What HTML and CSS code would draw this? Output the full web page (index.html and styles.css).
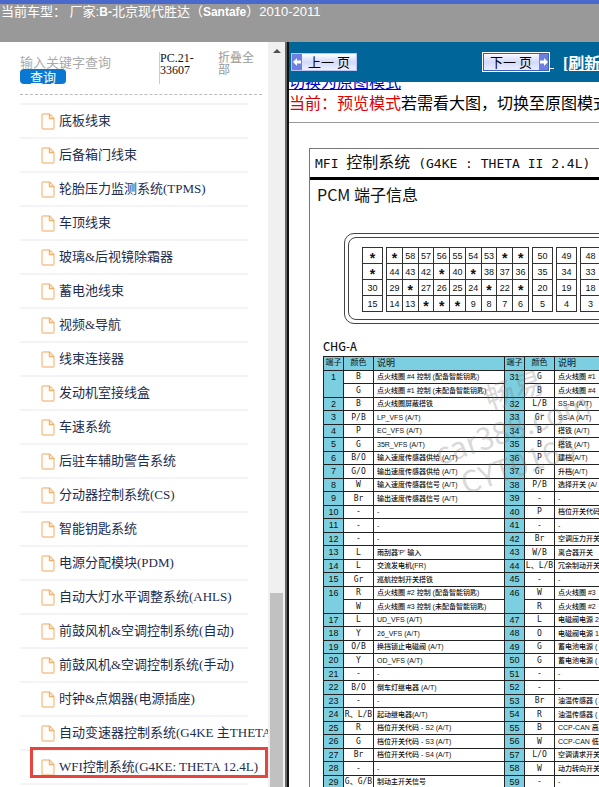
FILE: index.html
```html
<!DOCTYPE html>
<html lang="zh-CN">
<head>
<meta charset="utf-8">
<title>北京现代胜达（Santafe）2010-2011</title>
<link rel="stylesheet" href="styles.css">
</head>
<body>
<svg class="defs" aria-hidden="true">
  <symbol id="doc" viewBox="0 0 14 17">
    <path d="M2 1h6.500l4.500 4.500V15q0 1-1 1H2q-1 0-1-1V2q0-1 1-1z" fill="#fffdf9" stroke="#f3c595" stroke-width="1.400"/>
    <path d="M8.500 1v4.500H13" fill="none" stroke="#f0b36c" stroke-width="1.400"/>
  </symbol>
</svg>
<header class="topbar">
  <h1>当前车型： 厂家:<b>B-</b>北京现代胜达（<b>Santafe</b>）2010-2011</h1>
</header>
<div class="frames">
  <aside class="sidebar">
    <div class="side-body">
      <form class="search">
        <div class="search-box">
          <input type="text" aria-label="输入关键字查询" placeholder="输入关键字查询">
          <button type="button">查询</button>
        </div>
        <div class="code">PC.21-33607</div>
        <a class="fold" href="#">折叠全部</a>
      </form>
      <ul class="tree">
        <li><a href="#"><svg><use href="#doc"/></svg>底板线束</a></li>
        <li><a href="#"><svg><use href="#doc"/></svg>后备箱门线束</a></li>
        <li><a href="#"><svg><use href="#doc"/></svg>轮胎压力监测系统(TPMS)</a></li>
        <li><a href="#"><svg><use href="#doc"/></svg>车顶线束</a></li>
        <li><a href="#"><svg><use href="#doc"/></svg>玻璃&amp;后视镜除霜器</a></li>
        <li><a href="#"><svg><use href="#doc"/></svg>蓄电池线束</a></li>
        <li><a href="#"><svg><use href="#doc"/></svg>视频&amp;导航</a></li>
        <li><a href="#"><svg><use href="#doc"/></svg>线束连接器</a></li>
        <li><a href="#"><svg><use href="#doc"/></svg>发动机室接线盒</a></li>
        <li><a href="#"><svg><use href="#doc"/></svg>车速系统</a></li>
        <li><a href="#"><svg><use href="#doc"/></svg>后驻车辅助警告系统</a></li>
        <li><a href="#"><svg><use href="#doc"/></svg>分动器控制系统(CS)</a></li>
        <li><a href="#"><svg><use href="#doc"/></svg>智能钥匙系统</a></li>
        <li><a href="#"><svg><use href="#doc"/></svg>电源分配模块(PDM)</a></li>
        <li><a href="#"><svg><use href="#doc"/></svg>自动大灯水平调整系统(AHLS)</a></li>
        <li><a href="#"><svg><use href="#doc"/></svg>前鼓风机&amp;空调控制系统(自动)</a></li>
        <li><a href="#"><svg><use href="#doc"/></svg>前鼓风机&amp;空调控制系统(手动)</a></li>
        <li><a href="#"><svg><use href="#doc"/></svg>时钟&amp;点烟器(电源插座)</a></li>
        <li><a href="#"><svg><use href="#doc"/></svg>自动变速器控制系统(G4KE 主THETA</a></li>
        <li class="marked"><a href="#"><svg><use href="#doc"/></svg>WFI控制系统(G4KE: THETA 12.4L)</a></li>
        <li></li>
      </ul>
    </div>
    <div class="scrollbar" aria-hidden="true"><i class="arrow"></i><i class="thumb"></i></div>
  </aside>
  <main class="content">
    <nav class="pager">
      <button class="prev" type="button"><svg viewBox="0 0 10 16"><path d="M1 8l4-4v2.500h4v3H5V12z"/></svg><span>上一 页</span></button>
      <button class="next" type="button"><span>下一 页</span><svg viewBox="0 0 10 16"><path d="M9 8L5 4v2.500H1v3h4V12z"/></svg></button>
      <a href="#"><b>&nbsp;</b></a>
      <a class="refresh" href="#">[刷新]</a>
    </nav>
    <div class="mode">
      <p class="switch"><a href="#">切换为原图模式</a></p>
      <p><em>当前：预览模式</em>若需看大图，切换至原图模式</p>
    </div>
    <article class="sheet">
      <h2>MFI <span>控制系统</span> (G4KE : THETA II 2.4L)</h2>
      <h3>PCM 端子信息</h3>
      <div class="connector">
        <div class="shell">
          <div class="pins one"><i class="s">*</i><i class="s">*</i><i>30</i><i>15</i></div>
          <div class="pins nine">
            <i class="s">*</i><i>58</i><i>57</i><i>56</i><i>55</i><i>54</i><i>53</i><i class="s">*</i><i class="s">*</i>
            <i>44</i><i>43</i><i>42</i><i class="s">*</i><i>40</i><i class="s">*</i><i>38</i><i>37</i><i>36</i>
            <i>29</i><i class="s">*</i><i>27</i><i>26</i><i>25</i><i>24</i><i class="s">*</i><i>22</i><i class="s">*</i>
            <i>14</i><i>13</i><i class="s">*</i><i class="s">*</i><i class="s">*</i><i>9</i><i>8</i><i>7</i><i>6</i>
          </div>
          <div class="pins one"><i>50</i><i>35</i><i>20</i><i>5</i></div>
          <div class="pins one"><i>49</i><i>34</i><i>19</i><i>4</i></div>
          <div class="pins one"><i>48</i><i>33</i><i>18</i><i>3</i></div>
        </div>
      </div>
      <h4>CHG-A</h4>
      <div class="chart">
      <table>
        <colgroup><col class="c-no"><col class="c-color"><col class="c-text"><col class="c-no"><col class="c-color"><col class="c-text"></colgroup>
        <thead><tr><th>端子</th><th>颜色</th><th class="d">说明</th><th>端子</th><th>颜色</th><th class="d">说明</th></tr></thead>
        <tbody>
        <tr><th rowspan="2">1</th><td>B</td><td class="d">点火线圈 #4 控制 (配备智能钥匙)</td><th rowspan="2">31</th><td>G</td><td class="d">点火线圈 #1</td></tr>
        <tr><td>G</td><td class="d">点火线圈 #1 控制 (未配备智能钥匙)</td><td>B</td><td class="d">点火线圈 #4</td></tr>
        <tr><th>2</th><td>B</td><td class="d">点火线圈屏蔽搭铁</td><th>32</th><td>L/B</td><td class="d">SS-B (A/T)</td></tr>
        <tr><th>3</th><td>P/B</td><td class="d">LP_VFS (A/T)</td><th>33</th><td>Gr</td><td class="d">SS-A (A/T)</td></tr>
        <tr><th>4</th><td>P</td><td class="d">EC_VFS (A/T)</td><th>34</th><td>B</td><td class="d">搭铁 (A/T)</td></tr>
        <tr><th>5</th><td>G</td><td class="d">35R_VFS (A/T)</td><th>35</th><td>B</td><td class="d">搭铁 (A/T)</td></tr>
        <tr><th>6</th><td>B/O</td><td class="d">输入速度传感器供给 (A/T)</td><th>36</th><td>P</td><td class="d">建档(A/T)</td></tr>
        <tr><th>7</th><td>G/O</td><td class="d">输出速度传感器供给 (A/T)</td><th>37</th><td>Gr</td><td class="d">升档(A/T)</td></tr>
        <tr><th>8</th><td>W</td><td class="d">输入速度传感器信号 (A/T)</td><th>38</th><td>P/B</td><td class="d">选择开关 (A/</td></tr>
        <tr><th>9</th><td>Br</td><td class="d">输出速度传感器信号 (A/T)</td><th>39</th><td>-</td><td class="d">-</td></tr>
        <tr><th>10</th><td>-</td><td class="d">-</td><th>40</th><td>P</td><td class="d">档位开关代码</td></tr>
        <tr><th>11</th><td>-</td><td class="d">-</td><th>41</th><td>-</td><td class="d">-</td></tr>
        <tr><th>12</th><td>-</td><td class="d">-</td><th>42</th><td>Br</td><td class="d">空调压力开关</td></tr>
        <tr><th>13</th><td>L</td><td class="d">雨刮器'P' 输入</td><th>43</th><td>W/B</td><td class="d">离合器开关</td></tr>
        <tr><th>14</th><td>L</td><td class="d">交流发电机(FR)</td><th>44</th><td>L、L/B</td><td class="d">冗余制动开关</td></tr>
        <tr><th>15</th><td>Gr</td><td class="d">巡航控制开关搭铁</td><th>45</th><td>-</td><td class="d">-</td></tr>
        <tr><th rowspan="2">16</th><td>R</td><td class="d">点火线圈 #2 控制 (配备智能钥匙)</td><th rowspan="2">46</th><td>W</td><td class="d">点火线圈 #3</td></tr>
        <tr><td>W</td><td class="d">点火线圈 #3 控制 (未配备智能钥匙)</td><td>R</td><td class="d">点火线圈 #2</td></tr>
        <tr><th>17</th><td>L</td><td class="d">UD_VFS (A/T)</td><th>47</th><td>L</td><td class="d">电磁阀电源 2</td></tr>
        <tr><th>18</th><td>Y</td><td class="d">26_VFS (A/T)</td><th>48</th><td>O</td><td class="d">电磁阀电源 1</td></tr>
        <tr><th>19</th><td>O/B</td><td class="d">换挡锁止电磁阀 (A/T)</td><th>49</th><td>G</td><td class="d">蓄电池电源 (</td></tr>
        <tr><th>20</th><td>Y</td><td class="d">OD_VFS (A/T)</td><th>50</th><td>G</td><td class="d">蓄电池电源 (</td></tr>
        <tr><th>21</th><td>-</td><td class="d">-</td><th>51</th><td>-</td><td class="d">-</td></tr>
        <tr><th>22</th><td>B/O</td><td class="d">倒车灯继电器 (A/T)</td><th>52</th><td>-</td><td class="d">-</td></tr>
        <tr><th>23</th><td>-</td><td class="d">-</td><th>53</th><td>Br</td><td class="d">油温传感器 (</td></tr>
        <tr><th>24</th><td>R、L/B</td><td class="d">起动继电器(A/T)</td><th>54</th><td>R</td><td class="d">油温传感器 (</td></tr>
        <tr><th>25</th><td>R</td><td class="d">档位开关代码 - S2 (A/T)</td><th>55</th><td>B</td><td class="d">CCP-CAN 高电</td></tr>
        <tr><th>26</th><td>G</td><td class="d">档位开关代码 - S3 (A/T)</td><th>56</th><td>W</td><td class="d">CCP-CAN 低电</td></tr>
        <tr><th>27</th><td>Br</td><td class="d">档位开关代码 - S4 (A/T)</td><th>57</th><td>L/O</td><td class="d">空调请求开关</td></tr>
        <tr><th>28</th><td>-</td><td class="d">-</td><th>58</th><td>W</td><td class="d">动力转向开关</td></tr>
        <tr><th>29</th><td>G、G/B</td><td class="d">制动主开关信号</td><th>59</th><td>-</td><td class="d">-</td></tr>
        </tbody>
      </table>
      <div class="watermark"><span>畅易</span><span>car388.com</span><span>CYT0165</span></div>
      </div>
    </article>
  </main>
</div>
</body>
</html>
```
FILE: styles.css
```css
*, *::after { box-sizing: border-box; }
body {
  margin: 0;
  height: 100vh;
  display: flex;
  flex-direction: column;
  overflow: hidden;
  background: #999;
  font-family: "Liberation Serif", "Noto Sans CJK SC", serif;
}
h1, h2, h3, h4, p, ul { margin: 0; padding: 0; font-weight: normal; }
i, em { font-style: normal; }
.defs { display: none; }

.topbar {
  flex: none;
  height: 42px;
  border-top: 4px solid #4a69cc;
  padding-left: 1px;
}
.topbar h1 {
  color: #fff;
  font: 13px/16px "Liberation Sans", "Noto Sans CJK SC", sans-serif;
  white-space: nowrap;
}
.topbar b { font-size: 12px; }

.frames { flex: 1; min-height: 0; display: flex; }
.sidebar {
  flex: 0 0 289px;
  display: flex;
  background: #fff;
  border-right: 2px solid #111;
}
.side-body { flex: 1; min-width: 0; overflow: hidden; padding-left: 20px; }
.scrollbar {
  flex: 0 0 19px;
  display: flex;
  flex-direction: column;
  justify-content: space-between;
  align-items: center;
  background: #f0f0f0;
  border-right: 2px solid #666;
}
.arrow {
  margin-top: 7px;
  border: 4px solid transparent;
  border-top: 0;
  border-bottom: 4px solid #505050;
}
.thumb { width: 13px; height: 26%; background: #c1c1c1; }

.search {
  display: flex;
  height: 53px;
  margin-right: 6px;
  padding-top: 10px;
  border-bottom: 1px dashed #bbb;
}
.search-box { width: 139px; padding-top: 3px; }
.search input {
  display: block;
  width: 100%;
  height: 14px;
  border: 0;
  padding: 0;
  background: none;
  font: 13px/14px "Noto Sans CJK SC", sans-serif;
}
.search input::placeholder { color: #aaa; opacity: 1; }
.search button {
  display: block;
  width: 46px;
  height: 15px;
  border: 0;
  border-radius: 4px;
  padding: 0;
  background: #0a78d1;
  color: #fff;
  font: 13px/14px "Noto Sans CJK SC", sans-serif;
}
.code {
  width: 59px;
  height: 32px;
  padding-right: 20px;
  border-left: 1px solid #ccc;
  font-size: 12px;
  line-height: 12px;
  color: #111;
}
.fold {
  width: 38px;
  color: #999;
  font-size: 12px;
  line-height: 12px;
  text-decoration: none;
}

.tree { list-style: none; margin-top: 8px; }
.tree li {
  position: relative;
  width: 228px;
  height: 34px;
  border-top: 2px solid #f2f4f7;
}
.tree a {
  display: flex;
  align-items: center;
  gap: 4px;
  height: 32px;
  padding-left: 21px;
  color: #1d2d4d;
  font-size: 13px;
  line-height: 20px;
  text-decoration: none;
  white-space: nowrap;
}
.tree svg { flex: none; width: 14px; height: 17px; }
.marked::after {
  content: "";
  position: absolute;
  left: 10px;
  top: -4px;
  width: 238px;
  height: 31px;
  border: 3px solid #e8443e;
}

.content { flex: 1; min-width: 0; overflow: hidden; background: #fff; }
.pager {
  display: flex;
  align-items: center;
  height: 40px;
  padding-left: 2px;
  background: #069;
}
.pager button {
  display: flex;
  align-items: center;
  flex: none;
  width: 66px;
  height: 18px;
  padding: 0;
  border: 1px solid #b9c4f5;
  background: linear-gradient(#fff, #d3d9fb 50%, #eef0ff);
  color: #000;
  font: 13px/16px "Noto Sans CJK SC", sans-serif;
}
.pager button span { flex: 1; text-align: center; }
.pager button svg { width: 10px; height: 16px; background: #6d7fe0; fill: #fff; }
.pager .next {
  width: 68px;
  height: 20px;
  margin-left: 125px;
  border: 1px solid #fff;
  outline: 1px solid #3b5fc0;
  outline-offset: -2px;
}
.pager a { color: #fff; font-size: 16px; font-weight: bold; white-space: nowrap; }
.refresh { margin-left: 9px; }

.mode {
  height: 41px;
  border-bottom: 1px solid #999;
  overflow: hidden;
  font-size: 16px;
  line-height: 24px;
  white-space: nowrap;
}
.mode p { height: 24px; }
.mode .switch {
  display: flex;
  align-items: flex-end;
  height: 10px;
  overflow: hidden;
  line-height: 18px;
}
.mode a { color: #00c; }
.mode em { color: #d00; }

.sheet {
  width: max-content;
  margin: 25px 0 0 20px;
  border: 1px solid #777;
  color: #111;
  font-family: "Liberation Sans", "Noto Sans CJK SC", sans-serif;
}
.sheet h2 {
  height: 31px;
  padding-left: 5px;
  border-bottom: 3px solid #000;
  font: 13px/28px "DejaVu Sans Mono", "Noto Sans CJK SC", monospace;
  white-space: nowrap;
}
.sheet h2 span { font-size: 16px; }
.sheet h3 {
  padding-left: 7px;
  font: 16px/28px "Noto Sans CJK SC", sans-serif;
}
.connector {
  margin: 25px 0 0 34px;
  padding: 3px;
  border: 1px solid #444;
  border-radius: 10px;
}
.shell {
  display: flex;
  gap: 3px;
  padding: 9px 13px 7px;
  border: 1px solid #444;
  border-radius: 8px;
}
.pins {
  display: grid;
  grid-auto-rows: 16px;
  border-top: 1px solid #333;
  border-left: 1px solid #333;
}
.pins i {
  border-right: 1px solid #333;
  border-bottom: 1px solid #333;
  font-size: 9px;
  line-height: 16px;
  text-align: center;
}
.pins .s { font-size: 14px; font-weight: bold; line-height: 20px; }
.one { grid-template-columns: 20px; }
.nine { width: 143px; grid-template-columns: repeat(9, 1fr); }
.sheet h4 {
  margin-top: 12px;
  padding-left: 13px;
  font: 500 11px/20px "Noto Sans CJK SC", sans-serif;
}
.chart { position: relative; margin-left: 13px; }
table {
  width: 362px;
  table-layout: fixed;
  border-spacing: 0;
  border-top: 1px solid #222;
  border-left: 1px solid #222;
}
.c-no { width: 20px; }
.c-color { width: 30px; }
.c-text { width: 131px; }
th, td {
  height: 13px;
  padding: 0;
  border-right: 1px solid #222;
  border-bottom: 1px solid #222;
  font-size: 8px;
  line-height: 12px;
  text-align: center;
  white-space: nowrap;
}
tr:nth-child(even) td { height: 14px; }
th { background: #7bcfe0; font-size: 9px; font-weight: normal; vertical-align: top; }
thead th { height: 14px; font-size: 8px; }
thead .d { font-size: 9px; }
td { font-family: "DejaVu Sans Mono", "Noto Sans CJK SC", monospace; }
.d { padding-left: 3px; text-align: left; }
td.d { font: 500 7px/12px "Liberation Sans", "Noto Sans CJK SC", sans-serif; }
.watermark {
  position: absolute;
  left: 108px;
  top: 17px;
  display: grid;
  color: rgba(120, 120, 120, 0.3);
  font: 30px/36px "Noto Sans CJK SC", sans-serif;
  transform: rotate(-19deg);
}
.watermark span:first-child { padding-left: 65px; }
.watermark span:last-child { padding-left: 15px; }
```
